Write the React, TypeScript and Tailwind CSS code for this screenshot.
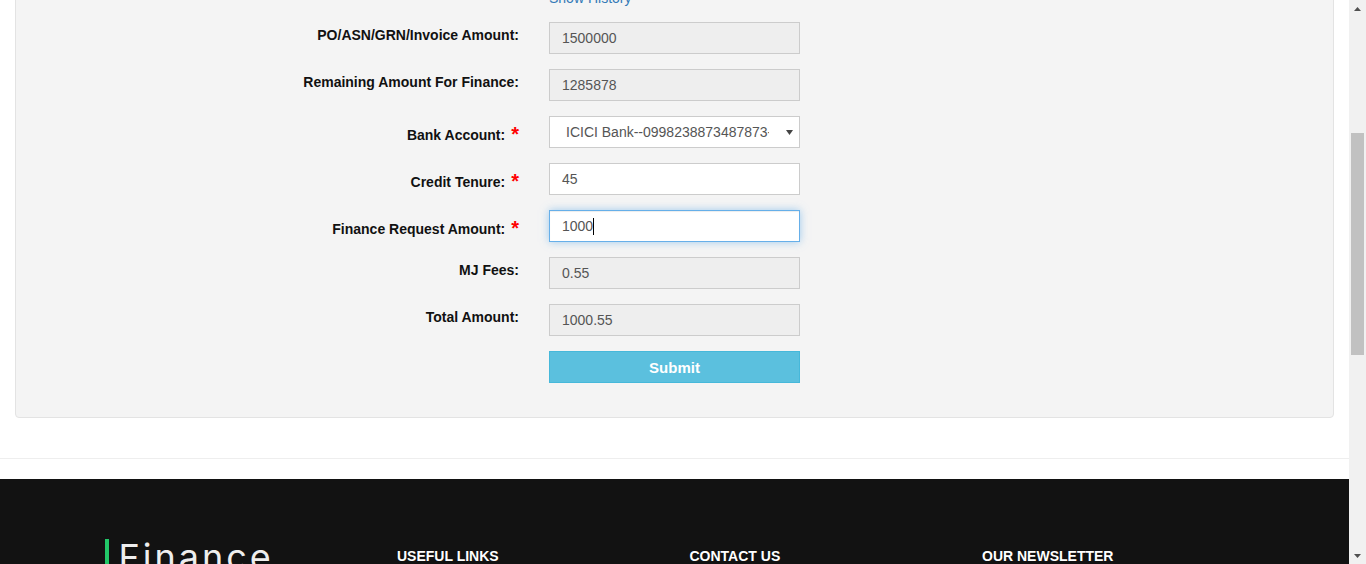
const rows = [
  { label: "PO/ASN/GRN/Invoice Amount:", value: "1500000", kind: "disabled" },
  { label: "Remaining Amount For Finance:", value: "1285878", kind: "disabled" },
  { label: "Bank Account:", value: "ICICI Bank--0998238873487873-Savings", kind: "select", required: true },
  { label: "Credit Tenure:", value: "45", kind: "text", required: true },
  { label: "Finance Request Amount:", value: "1000", kind: "focus", required: true },
  { label: "MJ Fees:", value: "0.55", kind: "disabled" },
  { label: "Total Amount:", value: "1000.55", kind: "disabled" },
];

function Field({ value, kind }: { value: string; kind: string }) {
  if (kind === "select") {
    return (
      <div className="flex h-[32px] w-[251px] items-center border border-[#ccc] bg-white pl-[16px] pr-[6px] text-[14px] leading-5 text-[#555]">
        <span className="w-[203px] overflow-hidden whitespace-nowrap">{value}</span>
        <svg className="ml-auto h-[5px] w-[7px]" viewBox="0 0 7 5">
          <path d="M0 0h7L3.5 5z" fill="#444" />
        </svg>
      </div>
    );
  }
  if (kind === "focus") {
    return (
      <div className="flex h-[32px] w-[251px] items-center border border-[#66afe9] bg-white px-3 text-[14px] leading-5 text-[#555] shadow-[inset_0_1px_1px_rgba(0,0,0,0.075),0_0_8px_rgba(102,175,233,0.6)]">
        <span>{value}</span>
        <span className="h-[17px] w-px bg-black" />
      </div>
    );
  }
  return (
    <div
      className={
        kind === "disabled"
          ? "flex h-[32px] w-[251px] items-center border border-[#ccc] bg-[#eee] px-3 text-[14px] leading-5 text-[#555]"
          : "flex h-[32px] w-[251px] items-center border border-[#ccc] bg-white px-3 text-[14px] leading-5 text-[#555]"
      }
    >
      {value}
    </div>
  );
}

function Scrollbar() {
  return (
    <div className="flex h-[564px] w-[17px] shrink-0 flex-col items-center bg-[#f1f1f1]">
      <div className="flex h-[17px] w-full items-center justify-center">
        <svg className="h-[4px] w-[7px]" viewBox="0 0 7 4">
          <path d="M0 4h7L3.5 0z" fill="#505050" />
        </svg>
      </div>
      <div className="mt-[116px] h-[222px] w-[13px] bg-[#c1c1c1]" />
      <div className="mt-auto flex h-[17px] w-full items-center justify-center">
        <svg className="h-[4px] w-[7px]" viewBox="0 0 7 4">
          <path d="M0 0h7L3.5 4z" fill="#505050" />
        </svg>
      </div>
    </div>
  );
}

export default function App() {
  return (
    <div className="flex h-[564px] w-[1366px] overflow-hidden bg-white font-['Liberation_Sans',Arial,sans-serif]">
      <div className="w-[1349px] shrink-0">
        {/* Finance request panel */}
        <div className="-mt-[40px] px-[15px]">
          <div className="rounded border border-[#e3e3e3] bg-[#f4f4f4] pt-[27px] pb-[19px]">
            <div className="mb-[14px] ml-[533px] text-[14px] leading-5 text-[#337ab7]">Show History</div>

            {rows.map((r) => (
              <div key={r.label} className="mb-[15px] flex">
                <div className="flex w-[503px] items-start justify-end">
                  <span className={r.required ? "pt-[9px] text-[14px] font-bold leading-5 text-[#111]" : "pt-[3px] text-[14px] font-bold leading-5 text-[#111]"}>
                    {r.label}
                  </span>
                  {r.required && (
                    <span className="ml-[6px] pt-[8px] text-[20px] font-bold leading-5 text-[#f00]">*</span>
                  )}
                </div>
                <div className="ml-[30px]">
                  <Field value={r.value} kind={r.kind} />
                </div>
              </div>
            ))}

            <div className="mb-[15px] ml-[533px]">
              <button className="h-[32px] w-[251px] border border-[#46b8da] bg-[#5bc0de] pt-[3px] text-[15px] font-bold text-white">
                Submit
              </button>
            </div>
          </div>
        </div>

        <div className="mt-[40px] border-t border-[#eee]" />

        {/* Footer */}
        <footer className="mt-[20px] bg-[#121212] pt-[60px] pb-10">
          <div className="mx-auto grid w-[1170px] grid-cols-4">
            <div className="px-[15px]">
              <div className="border-l-4 border-[#22c768] pl-[10px] font-['Inter',sans-serif] text-[36px] leading-none tracking-[3px] text-[#eee]">
                Finance
              </div>
            </div>
            <div className="px-[15px] pt-[7px] text-[14px] font-bold leading-5 text-white">USEFUL LINKS</div>
            <div className="px-[15px] pt-[7px] text-[14px] font-bold leading-5 text-white">CONTACT US</div>
            <div className="px-[15px] pt-[7px] text-[14px] font-bold leading-5 text-white">OUR NEWSLETTER</div>
          </div>
        </footer>
      </div>
      <Scrollbar />
    </div>
  );
}
